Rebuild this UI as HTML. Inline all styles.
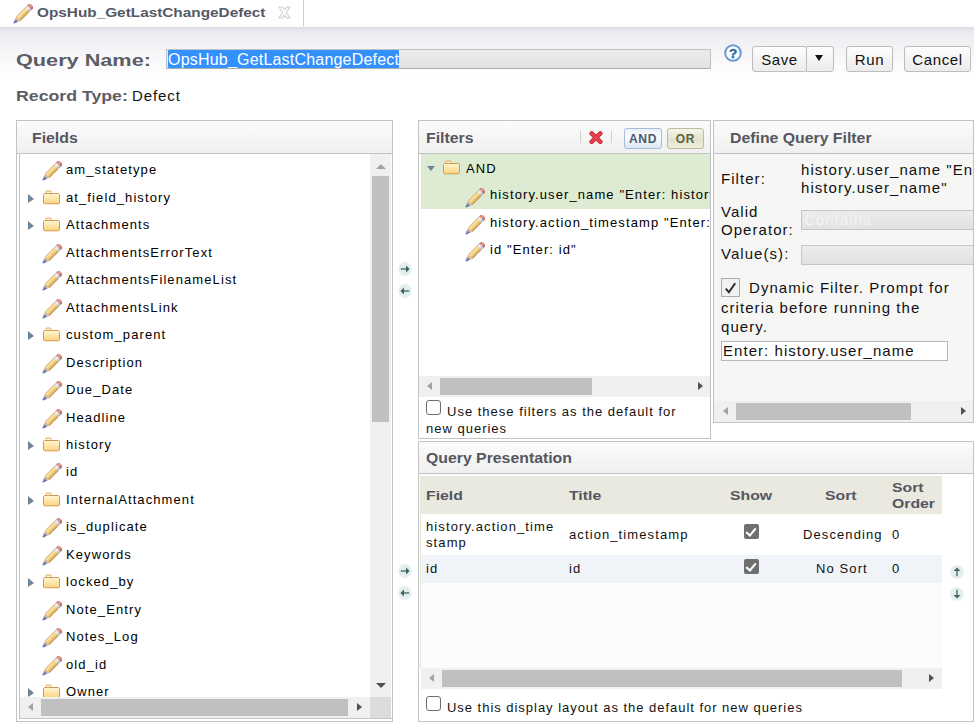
<!DOCTYPE html>
<html><head><meta charset="utf-8">
<style>
*{box-sizing:border-box;margin:0;padding:0}
html,body{width:974px;height:723px;overflow:hidden;background:#fff;font-family:"Liberation Sans",sans-serif;color:#111}
.a{position:absolute}
.nw{white-space:nowrap}
#topgrad{left:0;top:27px;width:974px;height:52px;background:linear-gradient(#dbdbe1 0px,#e6e6ec 3px,#eeeef2 9px,#f4f4f7 22px,#fbfbfc 38px,#fff 52px)}
.panel{position:absolute;border:1px solid #c3c3c3;background:#fff}
.phead{position:absolute;left:0;top:0;right:0;height:33px;background:linear-gradient(#fbfbfb,#f0f0f0);border-bottom:1px solid #c3c3c3}
.ptitle{position:absolute;top:9px;font:bold 14px "Liberation Sans",sans-serif;color:#55565f;white-space:nowrap;transform-origin:0 0;transform:scaleX(1.13)}
.btn{position:absolute;top:46px;height:26px;border:1px solid #bdbdbd;border-radius:3px;background:linear-gradient(#fdfdfd,#ececec);font:15px "Liberation Sans",sans-serif;color:#111;text-align:center;line-height:26px;letter-spacing:0.6px}
.row{position:absolute;height:27px;white-space:nowrap;font-size:13px;letter-spacing:1.1px;color:#000}
.track{position:absolute;background:#f0f0f0}
.thumb{position:absolute;background:#c0c0c0}
.arr{position:absolute;width:0;height:0;border-style:solid}
.ico{position:absolute}
.tri{position:absolute;width:0;height:0;border-style:solid;border-width:5px 0 4.5px 6px;border-color:transparent transparent transparent #6f8597}
.cb{position:absolute;width:15px;height:15px;border:1.3px solid #6e6e6e;border-radius:3px;background:#fff}
.qh{position:absolute;font:bold 13.5px "Liberation Sans",sans-serif;color:#55565f;white-space:nowrap;transform-origin:0 0;transform:scaleX(1.17)}
.qc{position:absolute;font-size:13px;letter-spacing:1.1px;color:#111;white-space:nowrap}
.qcb{position:absolute;width:15px;height:15px;border-radius:2px;background:#6f6f6f}
.qcb::after{content:"";position:absolute;left:4px;top:1.5px;width:4px;height:8px;border:solid #fff;border-width:0 2.2px 2.2px 0;transform:rotate(40deg)}
.circ{position:absolute;width:14px;height:14px;border-radius:50%;background:radial-gradient(circle,#e2eded 0,#e4eeee 55%,#eef5f5 80%,#f8fbfb 100%)}
</style></head><body>
<svg width="0" height="0" style="position:absolute">
<defs>
<linearGradient id="fgrad" x1="0" y1="0" x2="0" y2="1"><stop offset="0" stop-color="#fff6d4"/><stop offset="1" stop-color="#fcd37e"/></linearGradient>
<linearGradient id="pbody" gradientUnits="userSpaceOnUse" x1="7" y1="0" x2="13" y2="0"><stop offset="0" stop-color="#d9a868"/><stop offset="0.22" stop-color="#f8e6a8"/><stop offset="0.55" stop-color="#f0d07e"/><stop offset="0.8" stop-color="#dcae66"/><stop offset="1" stop-color="#b9844e"/></linearGradient>
<linearGradient id="pfer" gradientUnits="userSpaceOnUse" x1="7" y1="0" x2="13" y2="0"><stop offset="0" stop-color="#b8b8c6"/><stop offset="0.35" stop-color="#f6f6fb"/><stop offset="1" stop-color="#a8a8b8"/></linearGradient>
<linearGradient id="pers" gradientUnits="userSpaceOnUse" x1="7" y1="0" x2="13" y2="0"><stop offset="0" stop-color="#c87870"/><stop offset="0.4" stop-color="#e6a098"/><stop offset="1" stop-color="#b8605a"/></linearGradient>
<symbol id="pencil" viewBox="0 0 20 20"><g transform="rotate(45 10 10)">
<path d="M7 1 L7 -0.9 Q7 -2.7 10 -2.7 Q13 -2.7 13 -0.9 L13 1 Z" fill="url(#pers)"/>
<rect x="7" y="0.9" width="6" height="2.9" fill="url(#pfer)"/>
<rect x="7" y="3.7" width="6" height="12" fill="url(#pbody)"/>
<path d="M7 15.6 L13 15.6 L11.9 18 L8.1 18 Z" fill="#dcb890"/>
<path d="M8.1 17.9 L11.9 17.9 L10.5 21.6 Q10 22 9.5 21.6 Z" fill="#6070aa"/>
<path d="M8.1 17.9 L9.6 17.9 L9.8 21.8 Q9.5 21.8 9.4 21.5 Z" fill="#9ca2c8"/>
</g></symbol>
<symbol id="folder" viewBox="0 0 17 15">
<path d="M3.4 0.6 L7.6 0.6 L8.4 1.5 L8.4 3.6 L2.6 3.6 L2.6 1.5 Z" fill="#e2b26c"/>
<rect x="3.5" y="1.7" width="4" height="1.8" fill="#fffaf0"/>
<path d="M1.4 3.5 L15.6 3.5 L16.5 4.4 L16.5 12.9 L15.6 13.8 L1.4 13.8 L0.5 12.9 L0.5 4.4 Z" fill="url(#fgrad)" stroke="#d29a50" stroke-width="1"/>
</symbol>
</defs></svg>

<!-- tab bar -->
<svg class="ico" style="left:12px;top:4px" width="21" height="21"><use href="#pencil"/></svg>
<div class="a nw" style="left:37px;top:5px;font:bold 13px 'Liberation Sans',sans-serif;color:#555866;transform-origin:0 0;transform:scaleX(1.18)">OpsHub_GetLastChangeDefect</div>
<svg class="a" style="left:278px;top:6px" width="13" height="13" viewBox="0 0 13 13"><path d="M1 1 L4.4 1 L6.5 3.9 L8.6 1 L12 1 L8.3 6.5 L12 12 L8.6 12 L6.5 9.1 L4.4 12 L1 12 L4.7 6.5 Z" fill="#fff" stroke="#cdcdcd" stroke-width="1.1" stroke-linejoin="round"/></svg>
<div class="a" style="left:303px;top:0;width:1px;height:26px;background:#cfcfcf"></div>
<div class="a" id="topgrad"></div>

<!-- query name -->
<div class="a nw" style="left:16px;top:51px;font:bold 17px 'Liberation Sans',sans-serif;color:#5c5d64;transform-origin:0 0;transform:scaleX(1.275)">Query Name:</div>
<div class="a" style="left:166px;top:49px;width:545px;height:20px;border:1px solid #c2c2c2;border-bottom-color:#aeaeae;background:linear-gradient(#ececec,#e2e2e2)"></div>
<div class="a nw" style="left:168px;top:50px;height:18px;background:#3390ff;color:#fff;font:16px 'Liberation Sans',sans-serif;line-height:20px;overflow:hidden;border-radius:1px;letter-spacing:0.2px">OpsHub_GetLastChangeDefect</div>

<!-- help icon -->
<div class="a" style="left:724px;top:44px;width:18px;height:18px">
<svg width="18" height="18" viewBox="0 0 18 18"><circle cx="9" cy="9" r="7.8" fill="#fff" stroke="#6a9acf" stroke-width="2"/><text x="9" y="13.9" text-anchor="middle" font-family="Liberation Sans" font-weight="bold" font-size="13.5" fill="#2d68a6" stroke="#2d68a6" stroke-width="0.5">?</text></svg>
</div>

<div class="btn" style="left:752px;width:55px">Save</div>
<div class="btn" style="left:806px;width:28px;border-top-left-radius:0;border-bottom-left-radius:0"></div>
<div class="arr" style="left:815px;top:55px;border-width:6px 4px 0 4px;border-color:#111 transparent transparent transparent"></div>
<div class="btn" style="left:846px;width:47px">Run</div>
<div class="btn" style="left:904px;width:67px">Cancel</div>

<div class="a nw" style="left:16px;top:87px;font:bold 15px 'Liberation Sans',sans-serif;color:#5c5d64;transform-origin:0 0;transform:scaleX(1.18)">Record Type:</div><div class="a nw" style="left:132px;top:87px;font:15px 'Liberation Sans',sans-serif;color:#111;letter-spacing:0.9px">Defect</div>

<!-- FIELDS PANEL -->
<div class="panel" style="left:16px;top:120px;width:377px;height:602px">
  <div class="phead"><div class="ptitle" style="left:15px">Fields</div></div>
</div>
<div class="a" style="left:19px;top:154px;width:373px;height:565px;border:1px solid #c3c3c3;border-top:none;border-right:none;background:#fff"></div>
<div class="a" style="left:19px;top:154px;width:351px;height:543px;overflow:hidden">
<svg class="ico" style="left:22px;top:7px" width="21" height="21"><use href="#pencil"/></svg>
<div class="row" style="left:47px;top:8px">am_statetype</div>
<div class="tri" style="left:9px;top:40px"></div><svg class="ico" style="left:24px;top:36px" width="17" height="15"><use href="#folder"/></svg>
<div class="row" style="left:47px;top:36px">at_field_history</div>
<div class="tri" style="left:9px;top:67px"></div><svg class="ico" style="left:24px;top:63px" width="17" height="15"><use href="#folder"/></svg>
<div class="row" style="left:47px;top:63px">Attachments</div>
<svg class="ico" style="left:22px;top:90px" width="21" height="21"><use href="#pencil"/></svg>
<div class="row" style="left:47px;top:91px">AttachmentsErrorText</div>
<svg class="ico" style="left:22px;top:117px" width="21" height="21"><use href="#pencil"/></svg>
<div class="row" style="left:47px;top:118px">AttachmentsFilenameList</div>
<svg class="ico" style="left:22px;top:145px" width="21" height="21"><use href="#pencil"/></svg>
<div class="row" style="left:47px;top:146px">AttachmentsLink</div>
<div class="tri" style="left:9px;top:177px"></div><svg class="ico" style="left:24px;top:173px" width="17" height="15"><use href="#folder"/></svg>
<div class="row" style="left:47px;top:173px">custom_parent</div>
<svg class="ico" style="left:22px;top:200px" width="21" height="21"><use href="#pencil"/></svg>
<div class="row" style="left:47px;top:201px">Description</div>
<svg class="ico" style="left:22px;top:227px" width="21" height="21"><use href="#pencil"/></svg>
<div class="row" style="left:47px;top:228px">Due_Date</div>
<svg class="ico" style="left:22px;top:255px" width="21" height="21"><use href="#pencil"/></svg>
<div class="row" style="left:47px;top:256px">Headline</div>
<div class="tri" style="left:9px;top:287px"></div><svg class="ico" style="left:24px;top:283px" width="17" height="15"><use href="#folder"/></svg>
<div class="row" style="left:47px;top:283px">history</div>
<svg class="ico" style="left:22px;top:309px" width="21" height="21"><use href="#pencil"/></svg>
<div class="row" style="left:47px;top:310px">id</div>
<div class="tri" style="left:9px;top:342px"></div><svg class="ico" style="left:24px;top:338px" width="17" height="15"><use href="#folder"/></svg>
<div class="row" style="left:47px;top:338px">InternalAttachment</div>
<svg class="ico" style="left:22px;top:364px" width="21" height="21"><use href="#pencil"/></svg>
<div class="row" style="left:47px;top:365px">is_duplicate</div>
<svg class="ico" style="left:22px;top:392px" width="21" height="21"><use href="#pencil"/></svg>
<div class="row" style="left:47px;top:393px">Keywords</div>
<div class="tri" style="left:9px;top:424px"></div><svg class="ico" style="left:24px;top:420px" width="17" height="15"><use href="#folder"/></svg>
<div class="row" style="left:47px;top:420px">locked_by</div>
<svg class="ico" style="left:22px;top:447px" width="21" height="21"><use href="#pencil"/></svg>
<div class="row" style="left:47px;top:448px">Note_Entry</div>
<svg class="ico" style="left:22px;top:474px" width="21" height="21"><use href="#pencil"/></svg>
<div class="row" style="left:47px;top:475px">Notes_Log</div>
<svg class="ico" style="left:22px;top:502px" width="21" height="21"><use href="#pencil"/></svg>
<div class="row" style="left:47px;top:503px">old_id</div>
<div class="tri" style="left:9px;top:534px"></div><svg class="ico" style="left:24px;top:530px" width="17" height="15"><use href="#folder"/></svg>
<div class="row" style="left:47px;top:530px">Owner</div>
</div>
<!-- fields v scrollbar -->
<div class="track" style="left:370px;top:154px;width:21px;height:543px"></div>
<div class="arr" style="left:376px;top:164px;border-width:0 5px 5px 5px;border-color:transparent transparent #a3a3a3 transparent"></div>
<div class="thumb" style="left:372px;top:176px;width:17px;height:246px"></div>
<div class="arr" style="left:376px;top:683px;border-width:5px 5px 0 5px;border-color:#505050 transparent transparent transparent"></div>
<!-- fields h scrollbar -->
<div class="track" style="left:20px;top:697px;width:350px;height:21px"></div>
<div class="a" style="left:370px;top:697px;width:21px;height:21px;background:#dcdcdc"></div>
<div class="arr" style="left:28px;top:703px;border-width:4.5px 5px 4.5px 0;border-color:transparent #a3a3a3 transparent transparent"></div>
<div class="thumb" style="left:41px;top:699px;width:307px;height:17px"></div>
<div class="arr" style="left:357px;top:703px;border-width:4.5px 0 4.5px 5px;border-color:transparent transparent transparent #505050"></div>


<!-- FILTERS PANEL -->
<div class="panel" style="left:418px;top:120px;width:293px;height:319px">
  <div class="phead"><div class="ptitle" style="left:7px">Filters</div></div>
</div>


<!-- filters content -->
<div class="a" style="left:419px;top:154px;width:291px;height:222px;overflow:hidden">
  <div class="a" style="left:2px;top:0;width:289px;height:55px;background:#dcebd1"></div>
  <div class="arr" style="left:8px;top:12px;border-width:5px 4.5px 0 4.5px;border-color:#6f8597 transparent transparent transparent"></div>
  <svg class="ico" style="left:24px;top:6px" width="17" height="15"><use href="#folder"/></svg>
  <div class="row" style="left:47px;top:7px">AND</div>
  <svg class="ico" style="left:45px;top:34px" width="21" height="21"><use href="#pencil"/></svg>
  <div class="row" style="left:71px;top:33px">history.user_name "Enter: history.user_name"</div>
  <svg class="ico" style="left:45px;top:61px" width="21" height="21"><use href="#pencil"/></svg>
  <div class="row" style="left:71px;top:61px">history.action_timestamp "Enter: history.action_timestamp"</div>
  <svg class="ico" style="left:45px;top:88px" width="21" height="21"><use href="#pencil"/></svg>
  <div class="row" style="left:71px;top:88px">id "Enter: id"</div>
</div>
<div class="track" style="left:419px;top:376px;width:291px;height:21px"></div>
<div class="arr" style="left:427px;top:382px;border-width:4.5px 5px 4.5px 0;border-color:transparent #a3a3a3 transparent transparent"></div>
<div class="thumb" style="left:440px;top:378px;width:152px;height:17px"></div>
<div class="arr" style="left:698px;top:382px;border-width:4.5px 0 4.5px 5px;border-color:transparent transparent transparent #505050"></div>
<div class="cb" style="left:426px;top:400px"></div>
<div class="a" style="left:426px;top:403px;width:280px;font-size:13px;letter-spacing:1.0px;line-height:17px;color:#111;text-indent:21px">Use these filters as the default for new queries</div>

<!-- filter header icons -->
<div class="a" style="left:580px;top:131px;width:1px;height:12px;background:linear-gradient(90deg,#f0d8c0,#b8c8d8)"></div>
<svg class="a" style="left:589px;top:131px" width="14" height="13" viewBox="0 0 14 13"><path d="M2.6 2.4 L11.4 10.8 M11.4 2.4 L2.6 10.8" stroke="#c82836" stroke-width="4.4" stroke-linecap="round"/><path d="M2.6 2.4 L11.4 10.8 M11.4 2.4 L2.6 10.8" stroke="#e8404c" stroke-width="2.6" stroke-linecap="round"/></svg>
<div class="a" style="left:611px;top:131px;width:1px;height:12px;background:linear-gradient(90deg,#f0d8c0,#b8c8d8)"></div>
<div class="a" style="left:624px;top:128px;width:38px;height:21px;border:1px solid #a6bdd6;border-radius:3px;background:linear-gradient(#eaf1f8,#f8fbfd 45%,#dbe6f1);font:bold 12px 'Liberation Sans',sans-serif;color:#4a5870;text-align:center;line-height:20px;letter-spacing:0.6px">AND</div>
<div class="a" style="left:667px;top:128px;width:37px;height:21px;border:1px solid #bcbc9a;border-radius:3px;background:linear-gradient(#f6f6ea,#e2e2cc 55%,#ededdc);font:bold 12px 'Liberation Sans',sans-serif;color:#5c6244;text-align:center;line-height:20px;letter-spacing:0.8px">OR</div>

<!-- DEFINE QUERY FILTER -->
<div class="panel" style="left:713px;top:120px;width:261px;height:303px;background:#f6f7f5">
  <div class="phead"><div class="ptitle" style="left:16px">Define Query Filter</div></div>
</div>

<!-- QUERY PRESENTATION -->
<div class="panel" style="left:418px;top:441px;width:556px;height:281px">
  <div class="phead" style="height:32px"><div class="ptitle" style="left:7px;top:8px">Query Presentation</div></div>
</div>


<!-- dqf content -->
<div class="a" style="left:714px;top:154px;width:259px;height:247px;overflow:hidden;font-size:15px;color:#111">
  <div class="a nw" style="left:7px;top:16px;letter-spacing:1.05px">Filter:</div>
  <div class="a nw" style="left:87px;top:7px;line-height:17.5px;letter-spacing:1.05px">history.user_name "Enter: history.user_name"<br>history.user_name"</div>
  <div class="a nw" style="left:7px;top:49px;line-height:18px;letter-spacing:1.05px">Valid<br>Operator:</div>
  <div class="a" style="left:87px;top:56px;width:180px;height:20px;border:1px solid #c6c6c6;background:linear-gradient(#ececec,#e2e2e2);color:#f3f3f3;line-height:18px;padding-left:2px;letter-spacing:1.05px">Contains</div>
  <div class="a nw" style="left:7px;top:91px;letter-spacing:1.05px">Value(s):</div>
  <div class="a" style="left:87px;top:91px;width:180px;height:20px;border:1px solid #c6c6c6;background:linear-gradient(#ececec,#e2e2e2)"></div>
  <div class="a" style="left:7px;top:124px;width:19px;height:19px;border:1.6px solid #acacac;background:#f1f1f1"></div>
  <svg class="a" style="left:9px;top:127px" width="15" height="14" viewBox="0 0 15 14"><path d="M2.8 7.6 L5.9 11.3 L12.2 2.2" fill="none" stroke="#262626" stroke-width="1.9" stroke-linejoin="miter"/></svg>
  <div class="a nw" style="left:7px;top:124px;line-height:19.5px;letter-spacing:1.05px;text-indent:28px">Dynamic Filter. Prompt for<br>criteria before running the<br>query.</div>
  <div class="a nw" style="left:7px;top:187px;width:227px;height:20px;border:1px solid #b8b8b8;background:#fff;line-height:18px;padding-left:1px;letter-spacing:1.05px">Enter: history.user_name</div>
</div>
<div class="track" style="left:714px;top:401px;width:259px;height:21px"></div>
<div class="arr" style="left:723px;top:407px;border-width:4.5px 5px 4.5px 0;border-color:transparent #a3a3a3 transparent transparent"></div>
<div class="thumb" style="left:736px;top:403px;width:175px;height:17px"></div>
<div class="arr" style="left:961px;top:407px;border-width:4.5px 0 4.5px 5px;border-color:transparent transparent transparent #505050"></div>

<!-- qp content -->
<div class="a" style="left:420px;top:474px;width:522px;height:194px;background:#fcfcfc;border-left:1px solid #e6e8dc"></div><div class="a" style="left:421px;top:474px;width:521px;height:2px;background:#fff"></div>
<div class="a" style="left:421px;top:476px;width:521px;height:38px;background:#e9e9e0"></div>
<div class="a" style="left:421px;top:514px;width:521px;height:41px;background:#fff"></div>
<div class="a" style="left:421px;top:555px;width:521px;height:28px;background:#f0f3f8"></div>
<div class="qh" style="left:426px;top:488px">Field</div>
<div class="qh" style="left:569px;top:488px">Title</div>
<div class="qh" style="left:730px;top:488px">Show</div>
<div class="qh" style="left:825px;top:488px">Sort</div>
<div class="qh" style="left:892px;top:480px;line-height:15.5px">Sort<br>Order</div>
<div class="qc" style="left:426px;top:519px;line-height:15.5px">history.action_time<br>stamp</div>
<div class="qc" style="left:569px;top:527px">action_timestamp</div>
<div class="qcb" style="left:744px;top:524px"></div>
<div class="qc" style="left:803px;top:527px">Descending</div>
<div class="qc" style="left:892px;top:527px">0</div>
<div class="qc" style="left:426px;top:561px">id</div>
<div class="qc" style="left:569px;top:561px">id</div>
<div class="qcb" style="left:744px;top:559px"></div>
<div class="qc" style="left:816px;top:561px">No Sort</div>
<div class="qc" style="left:892px;top:561px">0</div>
<div class="track" style="left:421px;top:668px;width:521px;height:21px"></div>
<div class="arr" style="left:429px;top:674px;border-width:4.5px 5px 4.5px 0;border-color:transparent #a3a3a3 transparent transparent"></div>
<div class="thumb" style="left:442px;top:670px;width:460px;height:17px"></div>
<div class="arr" style="left:929px;top:674px;border-width:4.5px 0 4.5px 5px;border-color:transparent transparent transparent #505050"></div>
<div class="cb" style="left:426px;top:696px"></div>
<div class="a nw" style="left:447px;top:700px;font-size:13px;letter-spacing:0.97px;color:#111">Use this display layout as the default for new queries</div>

<!-- arrows between panels -->
<div class="circ" style="left:398px;top:262px"></div>
<svg class="a" style="left:398px;top:262px" width="14" height="14" viewBox="0 0 14 14"><path d="M2.8 7 L9 7" stroke="#3f665f" stroke-width="1.3"/><path d="M8 3.6 L11.6 7 L8 10.4 Z" fill="#3f665f"/></svg>
<div class="circ" style="left:398px;top:284px"></div>
<svg class="a" style="left:398px;top:284px" width="14" height="14" viewBox="0 0 14 14"><path d="M5 7 L11.2 7" stroke="#3f665f" stroke-width="1.3"/><path d="M6 3.6 L2.4 7 L6 10.4 Z" fill="#3f665f"/></svg>
<div class="circ" style="left:398px;top:564px"></div>
<svg class="a" style="left:398px;top:564px" width="14" height="14" viewBox="0 0 14 14"><path d="M2.8 7 L9 7" stroke="#3f665f" stroke-width="1.3"/><path d="M8 3.6 L11.6 7 L8 10.4 Z" fill="#3f665f"/></svg>
<div class="circ" style="left:398px;top:586px"></div>
<svg class="a" style="left:398px;top:586px" width="14" height="14" viewBox="0 0 14 14"><path d="M5 7 L11.2 7" stroke="#3f665f" stroke-width="1.3"/><path d="M6 3.6 L2.4 7 L6 10.4 Z" fill="#3f665f"/></svg>
<div class="circ" style="left:950px;top:565px"></div>
<svg class="a" style="left:950px;top:565px" width="14" height="14" viewBox="0 0 14 14"><path d="M7 5 L7 11.2" stroke="#3f665f" stroke-width="1.3"/><path d="M3.6 6 L7 2.4 L10.4 6 Z" fill="#3f665f"/></svg>
<div class="circ" style="left:950px;top:587px"></div>
<svg class="a" style="left:950px;top:587px" width="14" height="14" viewBox="0 0 14 14"><path d="M7 2.8 L7 9" stroke="#3f665f" stroke-width="1.3"/><path d="M3.6 8 L7 11.6 L10.4 8 Z" fill="#3f665f"/></svg>

</body></html>
